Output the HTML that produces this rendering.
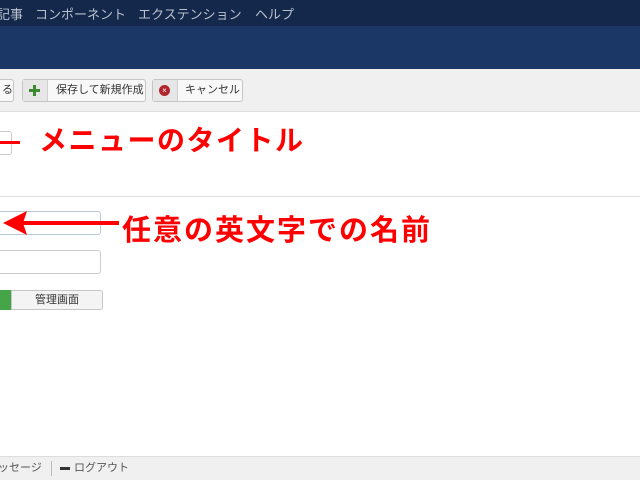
<!DOCTYPE html>
<html><head><meta charset="utf-8"><style>
*{margin:0;padding:0;box-sizing:border-box}
body{width:640px;height:480px;overflow:hidden;position:relative;background:#fff;font-family:"Liberation Sans","Noto Sans CJK JP",sans-serif;font-size:12px;color:#333}
.a{position:absolute}
.nav{left:0;top:0;width:640px;height:26px;background:#13284a;color:#b9c0cc;font-size:13px}
.nav span{position:absolute;top:4px}
.band{left:0;top:26px;width:640px;height:43px;background:#1a3766}
.tb{left:0;top:69px;width:640px;height:43px;background:#f0f0f0;border-bottom:1px solid #ddd}
.btn{position:absolute;top:10px;height:23px;border:1px solid #c5c5c5;border-radius:3px;background:#f8f8f8;font-size:11px;line-height:21px;color:#333}
.btn .ic{position:absolute;left:0;top:0;bottom:0;width:25px;background:#e6e6e6;border-right:1px solid #cfcfcf}
.red{color:#f00;font-weight:bold;font-family:"Liberation Sans","Noto Sans CJK JP",sans-serif}
.inp{border:1px solid #ccc;border-radius:3px;background:#fff}
.foot{left:0;top:456px;width:640px;height:24px;background:#f0f0f0;border-top:1px solid #ddd;font-size:11px;color:#555;line-height:23px}
</style></head><body>
<div class="a nav"><span style="left:-3px">記事</span><span style="left:35px">コンポーネント</span><span style="left:138px">エクステンション</span><span style="left:255px">ヘルプ</span></div>
<div class="a band"></div>
<div class="a tb">
<div class="btn" style="left:-10px;width:24px;padding-left:11px">る</div>
<div class="btn" style="left:22px;width:124px"><div class="ic"><span style="position:absolute;left:6px;top:5px;width:11px;height:11px"><span style="position:absolute;left:4px;top:0;width:3px;height:11px;background:#3a8a2e"></span><span style="position:absolute;left:0;top:4px;width:11px;height:3px;background:#3a8a2e"></span></span></div><span style="position:absolute;left:33px">保存して新規作成</span></div>
<div class="btn" style="left:152px;width:91px"><div class="ic"><span style="position:absolute;left:6px;top:5px;width:11px;height:11px;border-radius:50%;background:#b0262c;color:#fff;font-size:8px;line-height:11px;text-align:center">×</span></div><span style="position:absolute;left:32px">キャンセル</span></div>
</div>
<div class="a inp" style="left:-5px;top:131px;width:17px;height:24px"></div>
<div class="a" style="left:0;top:141px;width:20px;height:3px;background:#f00"></div>
<div class="a red" style="left:39px;top:119px;font-size:28px;letter-spacing:1.5px;white-space:nowrap">メニューのタイトル</div>
<div class="a" style="left:0;top:196px;width:640px;height:1px;background:#e2e2e2"></div>
<div class="a inp" style="left:-5px;top:211px;width:106px;height:24px;border-color:#b9c8d8"></div>
<div class="a" style="left:22px;top:221px;width:97px;height:4px;background:#f00"></div>
<svg class="a" style="left:3px;top:211px" width="24" height="24"><polygon points="0,12 24,0 20,12 24,24" fill="#f00"/></svg>
<div class="a red" style="left:122px;top:207px;font-size:29px;letter-spacing:2px;white-space:nowrap">任意の英文字での名前</div>
<div class="a inp" style="left:-5px;top:250px;width:106px;height:24px"></div>
<div class="a" style="left:-5px;top:290px;width:17px;height:20px;background:#46a546;border-radius:3px 0 0 3px"></div>
<div class="a" style="left:11px;top:290px;width:92px;height:20px;border:1px solid #c5c5c5;border-radius:0 3px 3px 0;background:#f4f4f4;font-size:11px;text-align:center;line-height:18px">管理画面</div>
<div class="a foot"><span style="position:absolute;left:-2px">ッセージ</span><span style="position:absolute;left:51px;top:4px;width:1px;height:15px;background:#bbb"></span><span style="position:absolute;left:60px;top:10px;width:10px;height:3px;background:#333"></span><span style="position:absolute;left:74px">ログアウト</span></div>
</body></html>
